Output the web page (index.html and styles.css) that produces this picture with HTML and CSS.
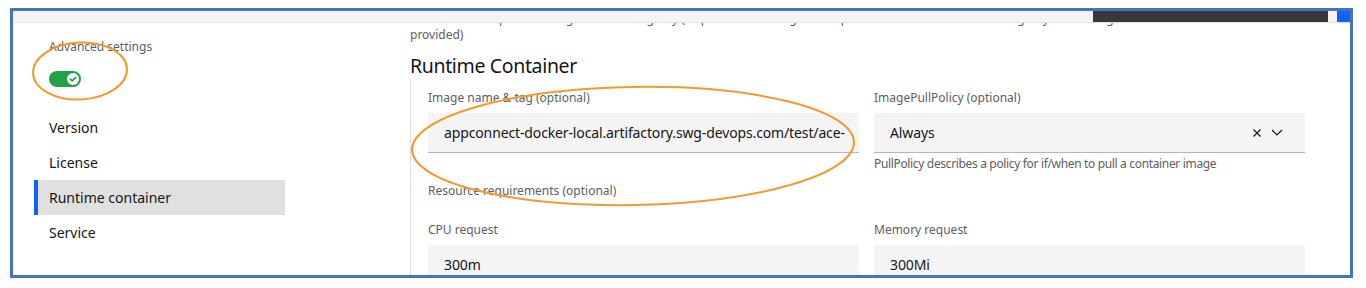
FILE: index.html
```html
<!DOCTYPE html>
<html lang="en">
<head>
    <meta charset="UTF-8">
    <title>Runtime Container - Advanced settings</title>
    <link rel="stylesheet" href="styles.css">
</head>
<body>
    <div class="frame">
        <!-- Top strip (scrolled header) -->
        <div class="topbar">
            <div class="topbar-dark"></div>
            <div class="topbar-blue"></div>
        </div>

        <div class="main">
            <!-- Side navigation -->
            <aside class="sidebar">
                <div class="toggle-label">Advanced settings</div>
                <div class="toggle">
                    <span class="knob">
                        <svg width="12" height="12" viewBox="0 0 12 12"><path d="M3.4 6.1 L5.2 7.9 L8.7 4.3" fill="none" stroke="#24a148" stroke-width="1.7" stroke-linecap="round" stroke-linejoin="round"/></svg>
                    </span>
                </div>
                <nav class="side-nav">
                    <a href="#">Version</a>
                    <a href="#">License</a>
                    <a href="#" class="active">Runtime container</a>
                    <a href="#">Service</a>
                </nav>
            </aside>

            <!-- Form content -->
            <section class="content">
                <p class="help-top">Secrets used to pull the image from the registry (required if the image is not pulled from the IBM Entitled Registry or no image was<br>provided)</p>
                <h2>Runtime Container</h2>

                <div class="group">
                    <div class="row">
                        <div class="field">
                            <label>Image name &amp; tag (optional)</label>
                            <div class="input">appconnect-docker-local.artifactory.swg-devops.com/test/ace-</div>
                        </div>
                        <div class="field">
                            <label>ImagePullPolicy (optional)</label>
                            <div class="input select">
                                <span class="select-value">Always</span>
                                <svg class="clear-icon" width="10" height="10" viewBox="0 0 10 10"><path d="M1.5 1.5 L8.5 8.5 M8.5 1.5 L1.5 8.5" stroke="#161616" stroke-width="1.2"/></svg>
                                <svg class="chevron" width="12" height="7" viewBox="0 0 12 7"><path d="M1 1 L6 6 L11 1" fill="none" stroke="#161616" stroke-width="1.2"/></svg>
                            </div>
                            <div class="helper">PullPolicy describes a policy for if/when to pull a container image</div>
                        </div>
                    </div>

                    <div class="group-label">Resource requirements (optional)</div>

                    <div class="row row-resources">
                        <div class="field">
                            <label>CPU request</label>
                            <div class="input">300m</div>
                        </div>
                        <div class="field">
                            <label>Memory request</label>
                            <div class="input">300Mi</div>
                        </div>
                    </div>
                </div>
            </section>
        </div>

        <!-- Review annotations drawn over the screenshot -->
        <svg class="annotations" width="1337" height="264" viewBox="0 0 1337 264">
            <ellipse cx="67" cy="60" rx="47" ry="28.5" transform="rotate(-3 67 60)"/>
            <ellipse cx="620" cy="135" rx="221" ry="59" transform="rotate(-1 620 135)"/>
        </svg>
    </div>
</body>
</html>
```

FILE: styles.css
```css
/* Base */
body {
    margin: 0;
    background-color: #fff;
    font-family: 'Noto Sans', 'Open Sans', sans-serif;
    color: #161616;
}

/* Outer frame */
.frame {
    position: relative;
    box-sizing: border-box;
    width: 1343px;
    height: 270px;
    margin: 8px 0 0 10px;
    border: 3px solid #4472c4;
    overflow: hidden;
    background-color: #fff;
}

/* Top strip */
.topbar {
    display: flex;
    justify-content: flex-end;
    height: 11px;
    background-color: #f4f4f4;
    border-bottom: 1px solid #e0e0e0;
    position: relative;
    z-index: 1;
}

.topbar-dark {
    width: 235px;
    margin-right: 9px;
    background-color: #393939;
}

.topbar-blue {
    width: 13px;
    background-color: #0f62fe;
}

.main {
    display: flex;
    gap: 125px;
    padding-left: 21px;
}

/* Sidebar */
.sidebar {
    width: 251px;
    flex-shrink: 0;
    padding-top: 16px;
}

.toggle-label {
    padding-left: 15px;
    font-size: 12px;
    line-height: 16px;
    color: #5e5e5e;
}

.toggle {
    display: flex;
    align-items: center;
    justify-content: flex-end;
    box-sizing: border-box;
    width: 32px;
    height: 16px;
    margin: 16px 0 0 15px;
    padding-right: 2px;
    border-radius: 8px;
    background-color: #24a148;
}

.knob {
    display: flex;
    width: 12px;
    height: 12px;
    border-radius: 50%;
    background-color: #fff;
}

.side-nav {
    margin-top: 23px;
}

.side-nav a {
    display: block;
    height: 35px;
    line-height: 35px;
    padding-left: 11px;
    border-left: 4px solid transparent;
    font-size: 14px;
    color: #161616;
    text-decoration: none;
}

.side-nav a.active {
    background-color: #e0e0e0;
    border-left-color: #0f62fe;
}

/* Content */
.content {
    flex: 1;
    margin-top: -12px;
}

.help-top {
    margin: 0;
    font-size: 12px;
    line-height: 16px;
    color: #5e5e5e;
}

h2 {
    margin: 10px 0 0;
    font-size: 19.5px;
    line-height: 26px;
    font-weight: 400;
    letter-spacing: -0.35px;
    color: #161616;
}

.group {
    border-left: 1px solid #e0e0e0;
    padding: 11px 0 0 17px;
}

.row {
    display: flex;
    gap: 15px;
}

.field {
    width: 431px;
}

label,
.group-label {
    display: block;
    font-size: 12px;
    line-height: 16px;
    color: #5e5e5e;
}

label {
    margin-bottom: 7px;
}

.group-label {
    margin-top: 11px;
}

.row-resources {
    margin-top: 23px;
}

.input {
    display: flex;
    align-items: center;
    box-sizing: border-box;
    height: 40px;
    padding: 0 16px;
    background-color: #f4f4f4;
    border-bottom: 1px solid #b5b5b5;
    font-size: 14px;
    letter-spacing: -0.13px;
    color: #161616;
    white-space: nowrap;
}

.select {
    padding-right: 22px;
}

.select-value {
    flex: 1;
}

.clear-icon {
    margin-right: 9px;
}

.helper {
    margin-top: 3px;
    font-size: 12px;
    line-height: 16px;
    letter-spacing: -0.34px;
    color: #5e5e5e;
}

/* Annotations */
.annotations {
    position: absolute;
    left: 0;
    top: 0;
    pointer-events: none;
}

.annotations ellipse {
    fill: none;
    stroke: #f39a2e;
    stroke-width: 2;
}
```
